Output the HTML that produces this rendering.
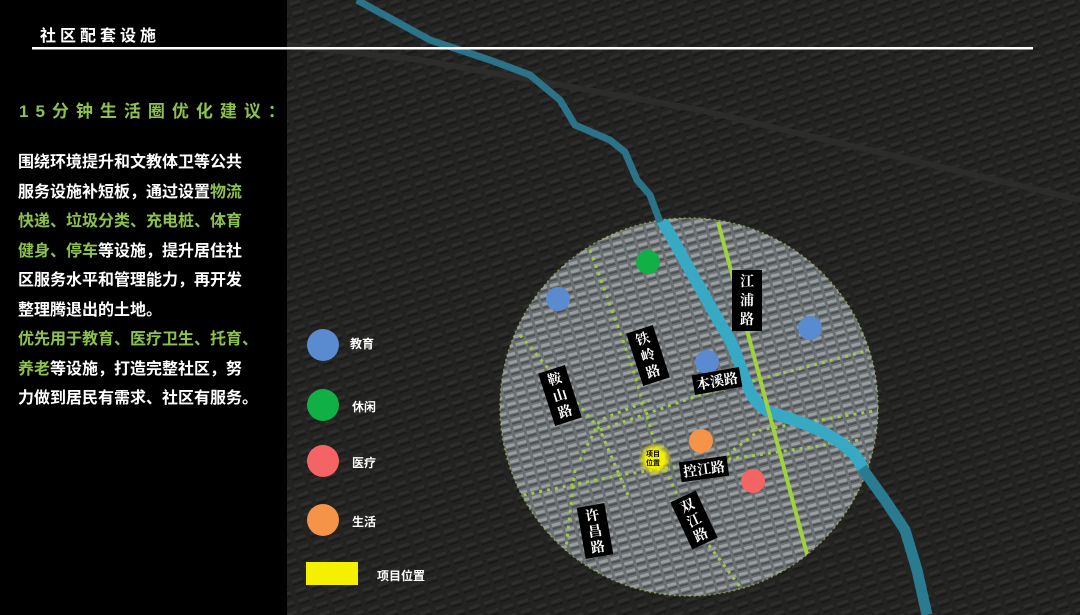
<!DOCTYPE html>
<html><head><meta charset="utf-8"><style>
*{margin:0;padding:0;box-sizing:border-box}
body{width:1080px;height:615px;overflow:hidden;background:#000;position:relative;font-family:"Liberation Sans","Noto Sans CJK SC",sans-serif}
.t{position:absolute;white-space:nowrap}
.lbl{position:absolute;background:#000;color:#fff;font-size:14px;font-weight:bold;line-height:16px;text-align:center;padding:2px 3px;font-family:"Noto Serif CJK SC","Noto Sans CJK SC",serif}
.g{color:#8dc34a}
</style></head><body>
<svg width="1080" height="615" style="position:absolute;left:0;top:0">
<defs>
<pattern id="blk" width="16" height="10" patternUnits="userSpaceOnUse" patternTransform="rotate(-18)">
<rect width="16" height="10" fill="#232322"/>
<rect x="2" y="2" width="11" height="3" fill="#2e2d2b"/>
<rect x="2" y="6" width="11" height="2" fill="#1a1a1a"/>
</pattern>
<pattern id="cblk" width="12" height="8" patternUnits="userSpaceOnUse" patternTransform="rotate(-15)">
<rect width="12" height="8" fill="#6c7174"/>
<rect x="1" y="1" width="9" height="3" fill="#9a9ea0"/>
<rect x="1" y="5" width="9" height="2" fill="#4c5154"/>
</pattern>
<clipPath id="cc"><circle cx="689" cy="407" r="189"/></clipPath>
<radialGradient id="yg"><stop offset="0.55" stop-color="#f4f000"/><stop offset="1" stop-color="#f4f000" stop-opacity="0"/></radialGradient>
</defs>
<rect x="287" y="0" width="793" height="615" fill="url(#blk)"/>
<path d="M287 45 L420 60 L700 110 L1080 200" stroke="#2c2c2b" stroke-width="6" fill="none"/>
<g clip-path="url(#cc)">
<rect x="490" y="210" width="400" height="400" fill="url(#cblk)"/>
<g stroke="#9ccc4a" stroke-width="3" stroke-dasharray="3 5" fill="none">
<path d="M590 250 L630 360 L660 460 L690 520 L750 600"/>
<path d="M520 335 L600 430 L630 500"/>
<path d="M500 500 L620 475 L860 440"/>
<path d="M600 430 L700 395 L870 350"/>
<path d="M880 410 L760 430 L720 460"/>
<path d="M580 460 L600 420 L650 400"/>
<path d="M575 470 L560 600"/>
</g>
<path d="M653 205 C680 250 700 290 730 340 C745 370 745 400 770 412 C800 422 830 430 855 455 C870 480 890 510 910 540" stroke="#37a9c4" stroke-width="12" fill="none"/>
<path d="M718 222 L808 558" stroke="#9fd23c" stroke-width="4"/>
</g>
<circle cx="689" cy="407" r="189" fill="none" stroke="#9fbf5a" stroke-width="1.5" stroke-dasharray="2 3" opacity="0.7"/>
<path d="M357 0 L430 40 L490 60 L530 75 L560 100 L575 125 L610 140 L625 152 L637 180 L650 195 L660 222" stroke="#2a7388" stroke-width="7" fill="none"/>
<path d="M862 468 L885 500 L905 530 L917 570 L927 615" stroke="#2a7a90" stroke-width="11" fill="none"/>
<circle cx="648" cy="262" r="12" fill="#11b046"/>
<circle cx="558" cy="299" r="12" fill="#5a8bd0"/>
<circle cx="810" cy="328" r="12" fill="#5a8bd0"/>
<circle cx="707" cy="362" r="12" fill="#5a8bd0"/>
<circle cx="701" cy="441" r="12" fill="#f59448"/>
<circle cx="753" cy="481" r="12" fill="#f46464"/>
<circle cx="655" cy="459" r="17" fill="url(#yg)"/>
<circle cx="323" cy="345" r="16" fill="#5a8bd0"/>
<circle cx="323" cy="405" r="16" fill="#11b046"/>
<circle cx="323" cy="461" r="16" fill="#f46464"/>
<circle cx="323" cy="520" r="16" fill="#f59448"/>
<rect x="306" y="562" width="52" height="23" fill="#f4f000"/>
<rect x="32" y="47" width="1001" height="2.5" fill="#fff"/>
</svg>
<div class="t" style="left:40px;top:22px;color:#fff;font-size:16px;font-weight:bold;letter-spacing:4px">社区配套设施</div>
<div class="t g" style="left:19px;top:97px;font-size:17px;font-weight:bold;letter-spacing:7px">15分钟生活圈优化建议：</div>
<div class="t" style="left:18px;top:148px;color:#fff;font-size:16px;font-weight:bold;line-height:29.5px">围绕环境提升和文教体卫等公共<br>服务设施补短板，通过设置<span class="g">物流</span><br><span class="g">快递、垃圾分类、充电桩、体育</span><br><span class="g">健身、停车</span>等设施，提升居住社<br>区服务水平和管理能力，再开发<br>整理腾退出的土地。<br><span class="g">优先用于教育、医疗卫生、托育、</span><br><span class="g">养老</span>等设施，打造完整社区，努<br>力做到居民有需求、社区有服务。</div>
<div class="t" style="left:350px;top:335px;color:#fff;font-size:12px;font-weight:bold">教育</div>
<div class="t" style="left:352px;top:398px;color:#fff;font-size:12px;font-weight:bold">休闲</div>
<div class="t" style="left:352px;top:454px;color:#fff;font-size:12px;font-weight:bold">医疗</div>
<div class="t" style="left:352px;top:513px;color:#fff;font-size:12px;font-weight:bold">生活</div>
<div class="t" style="left:377px;top:567px;color:#fff;font-size:12px;font-weight:bold">项目位置</div>
<div class="t" style="left:646px;top:450px;color:#000;font-size:7px;line-height:9px;font-weight:bold">项目<br>位置</div>
<div class="lbl" style="left:732px;top:270px;width:30px;line-height:19px">江<br>浦<br>路</div>
<div class="lbl" style="left:634px;top:328px;width:28px;line-height:17px;transform:rotate(-18deg)">铁<br>岭<br>路</div>
<div class="lbl" style="left:546px;top:368px;width:28px;line-height:17px;transform:rotate(-18deg)">鞍<br>山<br>路</div>
<div class="lbl" style="left:693px;top:371px;transform:rotate(-10deg)">本溪路</div>
<div class="lbl" style="left:680px;top:459px;transform:rotate(-8deg)">控江路</div>
<div class="lbl" style="left:680px;top:494px;width:28px;line-height:16px;transform:rotate(-25deg)">双<br>江<br>路</div>
<div class="lbl" style="left:581px;top:505px;width:28px;line-height:16px;transform:rotate(-10deg)">许<br>昌<br>路</div>
</body></html>
